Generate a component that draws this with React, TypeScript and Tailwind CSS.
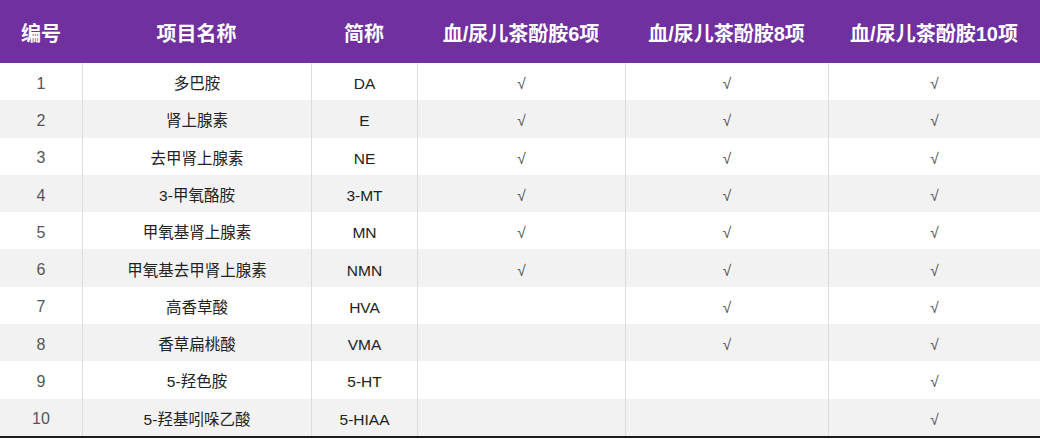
const headers = ['编号', '项目名称', '简称', '血/尿儿茶酚胺6项', '血/尿儿茶酚胺8项', '血/尿儿茶酚胺10项'];

const rows: [string, string, string, boolean, boolean, boolean][] = [
  ['1', '多巴胺', 'DA', true, true, true],
  ['2', '肾上腺素', 'E', true, true, true],
  ['3', '去甲肾上腺素', 'NE', true, true, true],
  ['4', '3-甲氧酪胺', '3-MT', true, true, true],
  ['5', '甲氧基肾上腺素', 'MN', true, true, true],
  ['6', '甲氧基去甲肾上腺素', 'NMN', true, true, true],
  ['7', '高香草酸', 'HVA', false, true, true],
  ['8', '香草扁桃酸', 'VMA', false, true, true],
  ['9', '5-羟色胺', '5-HT', false, false, true],
  ['10', '5-羟基吲哚乙酸', '5-HIAA', false, false, true],
];

const cols = 'grid grid-cols-[82px_229px_106px_208px_203px_1fr]';

export default function App() {
  return (
    <div className="w-[1040px] h-[439px] bg-white font-['Liberation_Sans','Noto_Sans_CJK_SC',sans-serif]">
      <div className={`${cols} h-[63px] bg-[#7030a0] text-white text-[20px] font-bold`}>
        {headers.map((h) => (
          <div key={h} className="flex items-center justify-center pt-[5px]">
            {h}
          </div>
        ))}
      </div>

      <div className="border-b-2 border-[#1a1a1a]">
        {rows.map((r, i) => (
          <div
            key={r[0]}
            className={`${cols} h-[37.3px] text-[15.5px] ${i % 2 === 1 ? 'bg-[#f2f2f2]' : 'bg-white'}`}
          >
            <div className="flex items-center justify-center pt-[4px] text-[16px] text-[#555]">{r[0]}</div>
            <div className="flex items-center justify-center pt-[4px] border-l border-[#dcdcdc] text-[#222]">{r[1]}</div>
            <div className="flex items-center justify-center pt-[4px] border-l border-[#dcdcdc] text-[#222]">{r[2]}</div>
            {[r[3], r[4], r[5]].map((c, j) => (
              <div key={j} className="flex items-center justify-center pt-[4px] border-l border-[#dcdcdc] text-[#555]">
                {c ? '√' : ''}
              </div>
            ))}
          </div>
        ))}
      </div>
    </div>
  );
}
